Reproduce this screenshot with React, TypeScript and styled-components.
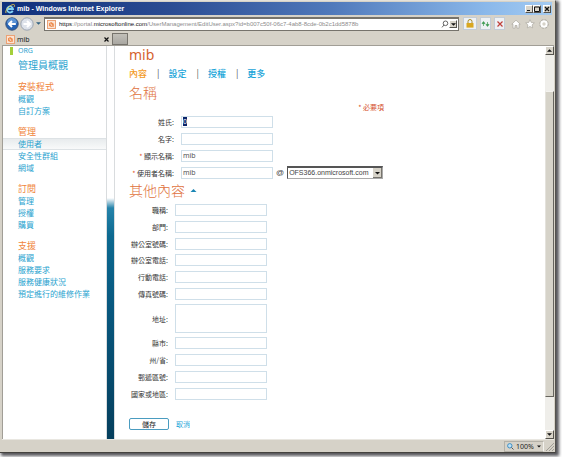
import React, { useEffect, useRef } from "react";
import styled, { createGlobalStyle } from "styled-components";

const CJK = `"Noto Sans CJK TC", sans-serif`;
const blue = "#2aa3cf";
const orange = "#f0853c";

const GlobalStyle = createGlobalStyle`
  *, *::before, *::after { box-sizing: border-box; }
  body { margin: 0; background: #fff; font-family: "Noto Sans", ${CJK}; font-size: 8px; color: #444; }
  button, input, select, textarea { font: inherit; color: inherit; margin: 0; }
  a { text-decoration: none; }
  h1, h2, h3, ul, p { margin: 0; padding: 0; font-weight: 400; }
  ul { list-style: none; }
`;

const Desktop = styled.div`
  min-height: 100vh;
  padding: 0 6px 4px 0;
  display: flex;
`;

const BrowserWindow = styled.div`
  flex: 1;
  min-width: 0;
  display: flex;
  flex-direction: column;
  padding: 1px 1px 0 2px;
  background: #d6d2c8;
  border-top: 1px solid #e4e1da;
  border-right: 1px solid #55534e;
  border-bottom: 1px solid #45433f;
  box-shadow: 2px 2px 3px 1px #55555a;
`;

const TitleBar = styled.header`
  height: 13px;
  display: flex;
  align-items: center;
  margin-right: 2px;
  padding: 0 1px 0 3px;
  background: linear-gradient(90deg, #10307c 0%, #2a4b92 30%, #5079bb 60%, #8ab8ea 88%, #a4cbf2 100%);
  color: #fff;
`;

const WindowTitle = styled.h1`
  flex: 1;
  margin-left: 2px;
  font: 700 7px/12px "Liberation Sans", sans-serif;
  white-space: nowrap;
`;

const WindowButton = styled.button<{ $gap?: boolean }>`
  width: 8px;
  height: 8px;
  padding: 0;
  margin-left: ${(p) => (p.$gap ? 2 : 0)}px;
  display: grid;
  place-items: center;
  border: 1px solid;
  border-color: #fff #55534e #55534e #fff;
  background: #d8d4ca;
  color: #111;
`;

const Toolbar = styled.div`
  height: 17px;
  display: flex;
  align-items: center;
  padding: 0 3px 0 2px;
`;

const IconButton = styled.button<{ $boxed?: boolean; $width?: number }>`
  width: ${(p) => p.$width ?? 14}px;
  height: 13px;
  padding: 0;
  display: grid;
  place-items: center;
  flex: none;
  border: ${(p) => (p.$boxed ? "1px solid #c3ccd6" : "0")};
  background: ${(p) => (p.$boxed ? "#eef1f4" : "transparent")};
`;

const AddressBar = styled.div`
  flex: 1;
  height: 14px;
  min-width: 0;
  display: flex;
  align-items: center;
  padding: 0 1px 0 2px;
  margin: 0 4px 0 1px;
  background: #fff;
  border: 1px solid #76736c;
  border-width: 2px 1px 1px;
`;

const Address = styled.p`
  flex: 1;
  min-width: 0;
  margin-left: 3px;
  overflow: hidden;
  white-space: nowrap;
  font: 6px/10px "Liberation Sans", sans-serif;
  color: #8c8c8c;
  b { font-weight: 400; color: #111; }
`;

const ToolGroup = styled.div`
  display: flex;
  gap: 3px;
  margin-right: 4px;
`;

const TabStrip = styled.div`
  height: 13px;
  display: flex;
  align-items: stretch;
  padding-top: 1px;
`;

const BrowserTab = styled.div`
  width: 110px;
  display: flex;
  align-items: center;
  gap: 2px;
  padding-left: 4px;
  color: #222;
  font-size: 7px;
  line-height: 11px;
`;

const TabClose = styled(IconButton)`
  width: 7px;
  margin: 0 2px 0 auto;
`;

const NewTab = styled.button`
  width: 16px;
  padding: 0;
  border: 1px solid #77746d;
  background: linear-gradient(#c2c0b9, #a9a7a1);
`;

const Viewport = styled.div`
  flex: 1;
  display: flex;
  background: #fff;
  border-top: 1px solid #a19e96;
  border-left: 1px solid #a19e96;
`;

const Sidebar = styled.nav`
  width: 103px;
  flex: none;
`;

const OrgLink = styled.a`
  display: flex;
  gap: 5px;
  padding-left: 7px;
  height: 10px;
  align-items: center;
  color: ${blue};
  font-size: 7px;
  line-height: 10px;
  &::before { content: ""; width: 3px; height: 8px; background: #a4cf3a; }
`;

const OverviewLink = styled.a`
  display: block;
  padding-left: 15px;
  margin: 1px 0 8px;
  font: 10px/15px ${CJK};
  color: ${blue};
`;

const NavGroup = styled.section`
  margin-bottom: 8px;
`;

const NavHeading = styled.h2`
  padding-left: 15px;
  font: 9px/13px ${CJK};
  color: ${orange};
`;

const NavLink = styled.a<{ $active?: boolean }>`
  display: block;
  padding-left: 15px;
  height: 12px;
  font: 8px/12px ${CJK};
  color: ${blue};
  white-space: nowrap;
  background: ${(p) => (p.$active ? "linear-gradient(#e6eaec, #fafbfb)" : "none")};
  box-shadow: ${(p) => (p.$active ? "inset 0 1px #dde2e5, inset 0 -1px #dde2e5" : "none")};
`;

const Stripe = styled.div`
  width: 9px;
  flex: none;
  border-left: 1px solid #d9dcde;
  border-right: 1px solid #d9dcde;
  background: linear-gradient(transparent 152px, #a9cddd 156px, #2583aa 162px, #0c6990 190px, #08587f 260px, #053f5d 100%);
`;

const Main = styled.main`
  flex: 1;
  min-width: 0;
  padding: 0 10px 8px 14px;
`;

const PageTitle = styled.h2`
  font: 14px/18px "Noto Sans", sans-serif;
  color: #d5622f;
`;

const SectionTabs = styled.ul`
  display: flex;
  margin-top: 3px;
  font: 500 9px/13px ${CJK};
  li + li::before { content: "|"; color: #555; font-weight: 400; margin: 0 9px 0 10px; }
`;

const SectionLink = styled.a<{ $active?: boolean }>`
  color: ${(p) => (p.$active ? "#f39a1d" : "#18a4d8")};
`;

const SectionTitle = styled.h3`
  display: flex;
  align-items: center;
  gap: 5px;
  font: 300 14px/18px ${CJK};
  color: #e0713c;
`;

const NameSection = styled.section`
  margin-top: 3px;
  width: 255px;
  max-width: 100%;
`;

const RequiredNote = styled.p`
  text-align: right;
  font: 7px/12px ${CJK};
  color: #d5502a;
`;

const FieldGrid = styled.div<{ $label: number; $rows: number; $height: number }>`
  display: grid;
  grid-template-columns: ${(p) => p.$label}px auto;
  grid-template-rows: repeat(${(p) => p.$rows}, 1fr);
  min-height: ${(p) => p.$height}px;
  column-gap: 7px;
  justify-content: start;
  align-items: center;
`;

const Label = styled.label`
  text-align: right;
  white-space: nowrap;
  font: 7px/12px ${CJK};
  color: #333;
  span { color: #e2582c; }
`;

const TextBox = styled.input`
  width: 92px;
  height: 12px;
  padding: 0 1px;
  border: 1px solid #cfdfe9;
  background: #fff;
  outline: none;
  font: 7px/10px "Noto Sans", ${CJK};
  color: #555;
  &::selection { background: #0a246a; color: #fff; }
`;

const TextArea = styled.textarea`
  display: block;
  width: 92px;
  height: 29px;
  padding: 2px;
  border: 1px solid #cfdfe9;
  resize: none;
  outline: none;
`;

const AccountRow = styled.div`
  display: flex;
  align-items: center;
  gap: 3px;
  font: 8px/12px "Liberation Sans", sans-serif;
`;

const SelectFrame = styled.div`
  position: relative;
  display: flex;
  svg { position: absolute; right: 1px; top: 2px; pointer-events: none; }
`;

const Select = styled.select`
  appearance: none;
  width: 96px;
  height: 13px;
  padding: 0 9px 0 1px;
  border: 1px solid #aaa;
  border-top: 2px solid #555;
  border-left: 1px solid #555;
  border-radius: 0;
  background: #fff;
  font: 7px/10px "Liberation Sans", sans-serif;
  color: #444;
`;

const Details = styled.section`
  ${SectionTitle} { margin-bottom: 3px; }
`;

const Actions = styled.div`
  display: flex;
  align-items: center;
  gap: 7px;
  margin-top: 16px;
`;

const SaveButton = styled.button`
  width: 40px;
  height: 12px;
  padding: 0;
  border: 1px solid #4a9cc0;
  border-radius: 2px;
  background: #fff;
  font: 7px/9px ${CJK};
  color: #222;
`;

const CancelLink = styled.a`
  font: 7px/12px ${CJK};
  color: #18a4d8;
`;

const Scrollbar = styled.div`
  width: 9px;
  flex: none;
  display: flex;
  flex-direction: column;
  background: #efeeea;
`;

const ScrollButton = styled(WindowButton)`
  width: 9px;
  height: 9px;
`;

const Thumb = styled.div`
  flex: 1;
  margin: 36px 0 33px;
  background: #d6d3c9;
  border: 1px solid;
  border-color: #f4f3ef #66645e #66645e #e4e2dc;
`;

const StatusBar = styled.footer`
  height: 13px;
  display: flex;
  justify-content: flex-end;
  align-items: center;
  border-top: 1px solid #e9e7e1;
`;

const Zoom = styled.button`
  display: flex;
  align-items: center;
  gap: 2px;
  height: 11px;
  width: 40px;
  padding: 0 2px;
  border: 1px solid #b4b1a8;
  border-right-color: #f4f3ef;
  background: transparent;
  font: 7px/9px "Noto Sans", sans-serif;
  color: #222;
  svg:last-child { margin-left: auto; }
`;

const Grip = styled.svg`
  margin-left: 1px;
`;

const IeLogo = () => (
  <svg width="10" height="10" viewBox="0 0 20 20" aria-hidden="true">
    <path d="M15.5 13.5A6 6 0 1 1 16 10H5" fill="none" stroke="#7fd0f4" strokeWidth="3.6" />
    <path d="M2 18C-1 13 10 1 17 1c3 0 2 3 1 5" fill="none" stroke="#f1cf4a" strokeWidth="1.8" />
  </svg>
);

const PageIcon = () => (
  <svg width="9" height="9" viewBox="0 0 9 9" aria-hidden="true">
    <rect x=".5" y=".5" width="8" height="8" fill="#fbe3d2" stroke="#eba276" />
    <path d="M2 3.2 4.2 2l2.6 1.8v3L4.4 7 2 6z" fill="#ee8d50" />
    <path d="M3.4 4 5.3 5.8" stroke="#fff" />
  </svg>
);

const Arrow = ({ up, size = 5, color = "#111" }: { up?: boolean; size?: number; color?: string }) => (
  <svg width={size} height="3" viewBox="0 0 6 3" aria-hidden="true">
    <path d={up ? "M0 3 3 0l3 3z" : "M0 0h6L3 3z"} fill={color} />
  </svg>
);

const NavCircle = ({ forward }: { forward?: boolean }) => (
  <svg width="14" height="14" viewBox="0 0 14 14" aria-hidden="true">
    <circle cx="7" cy="7" r="6.2" fill={forward ? "#dde2ea" : "#2563b4"} stroke={forward ? "#9aa3b0" : "#36517c"} />
    {!forward && <path d="M2 6a5 5 0 0 1 10 0q-5 2-10 0z" fill="#5b92d4" />}
    <path
      d={forward ? "M3.5 7h6M7 4l3 3-3 3" : "M10.8 7H4.5M7 4 4 7l3 3"}
      fill="none"
      stroke="#fff"
      strokeWidth="2"
    />
  </svg>
);

const navigation = [
  { title: "安裝程式", links: ["概觀", "自訂方案"] },
  { title: "管理", links: ["使用者", "安全性群組", "網域"] },
  { title: "訂閱", links: ["管理", "授權", "購買"] },
  { title: "支援", links: ["概觀", "服務要求", "服務健康狀況", "預定進行的維修作業"] },
];

const contactFields = ["職稱", "部門", "辦公室號碼", "辦公室電話", "行動電話", "傳真號碼"];
const addressFields = ["縣市", "州/省", "郵遞區號", "國家或地區"];

function Fields({ names, height }: { names: string[]; height: number }) {
  return (
    <FieldGrid $label={39} $rows={names.length} $height={height}>
      {names.map((name) => (
        <React.Fragment key={name}>
          <Label htmlFor={name}>{name}:</Label>
          <TextBox id={name} />
        </React.Fragment>
      ))}
    </FieldGrid>
  );
}

export default function App() {
  const surname = useRef<HTMLInputElement>(null);

  useEffect(() => {
    surname.current?.focus();
    surname.current?.select();
  }, []);

  return (
    <Desktop>
      <GlobalStyle />
      <BrowserWindow>
        <TitleBar>
          <IeLogo />
          <WindowTitle>mib - Windows Internet Explorer</WindowTitle>
          <WindowButton aria-label="Minimize">
            <svg width="6" height="6"><path d="M1 4.5h3" stroke="#111" /></svg>
          </WindowButton>
          <WindowButton aria-label="Maximize">
            <svg width="6" height="6"><path d="M.5 1h5v4.5h-5z" fill="none" stroke="#111" /></svg>
          </WindowButton>
          <WindowButton aria-label="Close" $gap>
            <svg width="6" height="6"><path d="m1 1 4 4M5 1 1 5" stroke="#111" strokeWidth="1.3" /></svg>
          </WindowButton>
        </TitleBar>

        <Toolbar>
          <IconButton aria-label="Back" $width={15}><NavCircle /></IconButton>
          <IconButton aria-label="Forward" $width={15}><NavCircle forward /></IconButton>
          <IconButton aria-label="Recent pages" $width={9}><Arrow color="#2f6183" /></IconButton>
          <AddressBar>
            <PageIcon />
            <Address>
              <b>https</b>://portal.<b>microsoftonline.com</b>
              /UserManagement/EditUser.aspx?id=b007c50f-06c7-4ab8-8cde-0b2c1dd5878b
            </Address>
            <IconButton aria-label="Search" $width={9}>
              <svg width="8" height="8"><circle cx="4.5" cy="3.3" r="2.3" fill="none" stroke="#666" /><path d="M3 5 1 7.4" stroke="#666" /></svg>
            </IconButton>
            <WindowButton aria-label="Show addresses"><Arrow /></WindowButton>
          </AddressBar>
          <ToolGroup>
            <IconButton aria-label="Security report" $boxed>
              <svg width="8" height="9"><path d="M2 4V2.5a2 2 0 0 1 4 0V4" fill="none" stroke="#a68a2c" /><rect x=".5" y="4" width="7" height="4.6" fill="#d9a720" /></svg>
            </IconButton>
            <IconButton aria-label="Refresh" $boxed $width={11}>
              <svg width="9" height="8"><path d="M2.5 6V3M1 3.6l1.5-2 1.5 2zM6.5 2v3M5 4.4l1.5 2 1.5-2z" fill="#3d9b51" stroke="#3d9b51" strokeWidth=".7" /></svg>
            </IconButton>
            <IconButton aria-label="Stop" $boxed $width={11}>
              <svg width="8" height="8"><path d="m1.5 1.5 5 5M6.5 1.5l-5 5" stroke="#c0403a" strokeWidth="1.2" /></svg>
            </IconButton>
          </ToolGroup>
          <IconButton aria-label="Home">
            <svg width="10" height="10"><path d="M.8 5.2 5 1.2l4.2 4H8v4H6V6.5H4v2.7H2v-4z" fill="#fff" stroke="#aaa79f" strokeWidth=".7" /></svg>
          </IconButton>
          <IconButton aria-label="Favorites">
            <svg width="10" height="10"><path d="m5 .7 1.3 2.8 3 .4-2.2 2 .6 3L5 7.5 2.3 8.9l.6-3-2.2-2 3-.4z" fill="#fff" stroke="#aaa79f" strokeWidth=".7" /></svg>
          </IconButton>
          <IconButton aria-label="Tools">
            <svg width="10" height="10"><circle cx="5" cy="5" r="3.7" fill="none" stroke="#aaa79f" strokeWidth="2" strokeDasharray="2 .9" /><circle cx="5" cy="5" r="2.7" fill="none" stroke="#fff" strokeWidth="2" /></svg>
          </IconButton>
        </Toolbar>

        <TabStrip>
          <BrowserTab>
            <PageIcon />
            mib
            <TabClose aria-label="Close tab">
              <svg width="5" height="5"><path d="m.5.5 4 4M4.5.5l-4 4" stroke="#111" strokeWidth="1.2" /></svg>
            </TabClose>
          </BrowserTab>
          <NewTab aria-label="New tab" />
        </TabStrip>

        <Viewport>
          <Sidebar>
            <OrgLink href="#org">ORG</OrgLink>
            <OverviewLink href="#admin">管理員概觀</OverviewLink>
            {navigation.map((group) => (
              <NavGroup key={group.title}>
                <NavHeading>{group.title}</NavHeading>
                {group.links.map((link) => (
                  <NavLink key={link} href="#nav" $active={link === "使用者"}>{link}</NavLink>
                ))}
              </NavGroup>
            ))}
          </Sidebar>
          <Stripe />
          <Main>
            <PageTitle>mib</PageTitle>
            <SectionTabs>
              {["內容", "設定", "授權", "更多"].map((name, i) => (
                <li key={name}><SectionLink href="#section" $active={i === 0}>{name}</SectionLink></li>
              ))}
            </SectionTabs>
            <NameSection>
              <SectionTitle>名稱</SectionTitle>
              <RequiredNote>* 必要項</RequiredNote>
              <FieldGrid $label={45} $rows={4} $height={68}>
                <Label htmlFor="surname">姓氏:</Label>
                <TextBox id="surname" ref={surname} defaultValue="0" />
                <Label htmlFor="given">名字:</Label>
                <TextBox id="given" />
                <Label htmlFor="display"><span>*</span> 顯示名稱:</Label>
                <TextBox id="display" defaultValue="mib" />
                <Label htmlFor="account"><span>*</span> 使用者名稱:</Label>
                <AccountRow>
                  <TextBox id="account" defaultValue="mib" />
                  @
                  <SelectFrame>
                    <Select aria-label="網域">
                      <option>OFS366.onmicrosoft.com</option>
                    </Select>
                    <svg width="9" height="10" aria-hidden="true">
                      <path d="M0 0h9v10H0z" fill="#77746d" />
                      <path d="M0 0h8v9H0z" fill="#d6d2c8" />
                      <path d="M2 4h5L4.5 6.5z" fill="#111" />
                    </svg>
                  </SelectFrame>
                </AccountRow>
              </FieldGrid>
            </NameSection>
            <Details>
              <SectionTitle>其他內容 <Arrow up size={7} color="#1a86b4" /></SectionTitle>
              <Fields names={contactFields} height={100} />
              <FieldGrid $label={39} $rows={1} $height={33}>
                <Label htmlFor="street">地址:</Label>
                <TextArea id="street" />
              </FieldGrid>
              <Fields names={addressFields} height={67} />
            </Details>
            <Actions>
              <SaveButton>儲存</SaveButton>
              <CancelLink href="#cancel">取消</CancelLink>
            </Actions>
          </Main>
          <Scrollbar>
            <ScrollButton aria-label="Scroll up"><Arrow up /></ScrollButton>
            <Thumb />
            <ScrollButton aria-label="Scroll down"><Arrow /></ScrollButton>
          </Scrollbar>
        </Viewport>

        <StatusBar>
          <Zoom>
            <svg width="7" height="7" aria-hidden="true"><circle cx="2.8" cy="2.8" r="2.2" fill="#bfe0f4" stroke="#3e8fc4" /><path d="m4.5 4.5 2 2" stroke="#555" /></svg>
            100%
            <Arrow size={4} />
          </Zoom>
          <Grip width="9" height="9" aria-hidden="true"><path d="M1 9 9 1M4 9l5-5M7 9l2-2" stroke="#a19e96" /></Grip>
        </StatusBar>
      </BrowserWindow>
    </Desktop>
  );
}
